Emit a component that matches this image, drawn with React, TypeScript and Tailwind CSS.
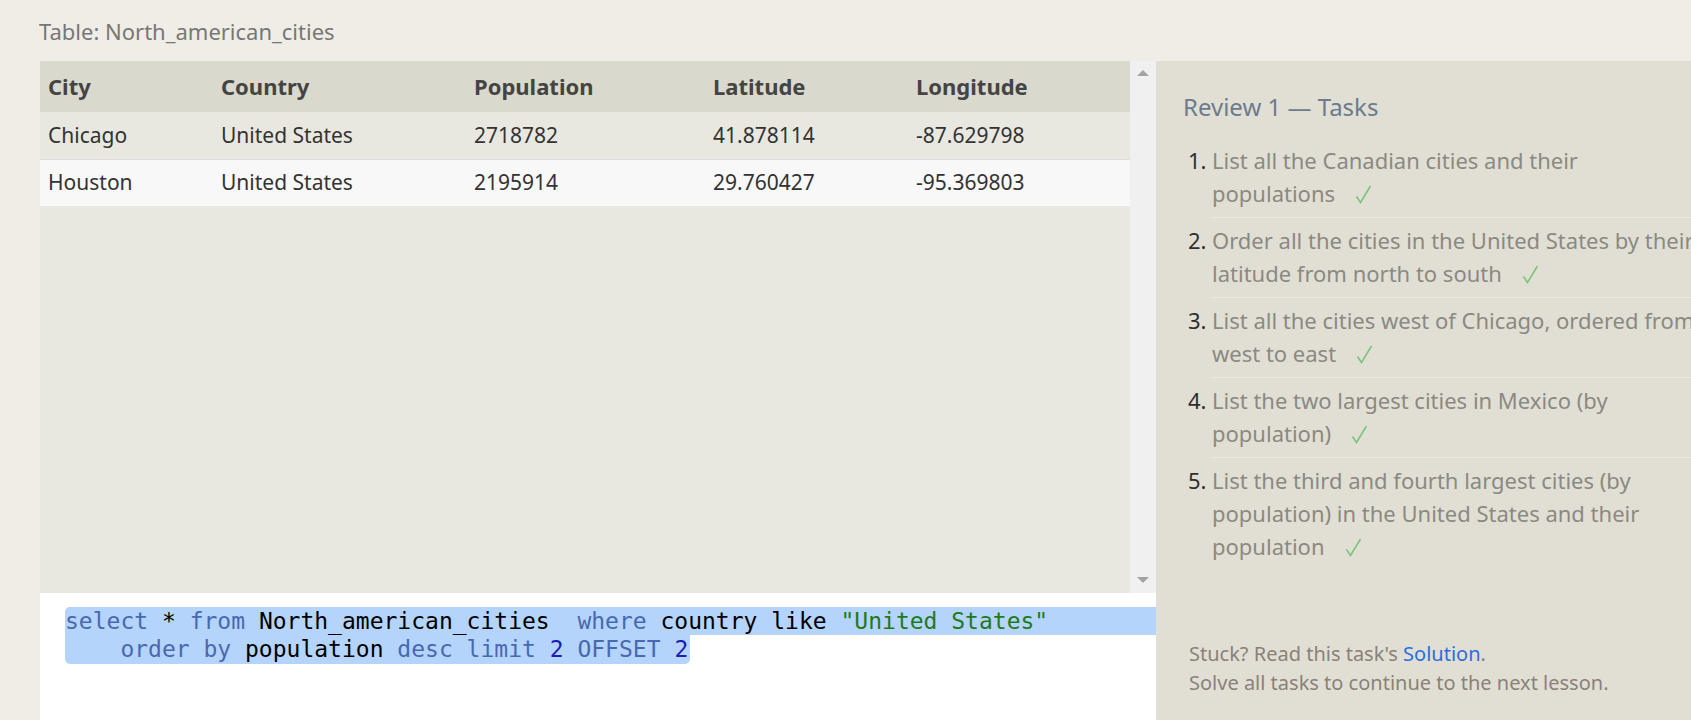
import React from "react";

type Row = { city: string; country: string; population: string; lat: string; lng: string };

const rows: Row[] = [
  { city: "Chicago", country: "United States", population: "2718782", lat: "41.878114", lng: "-87.629798" },
  { city: "Houston", country: "United States", population: "2195914", lat: "29.760427", lng: "-95.369803" },
];

const tasks: string[][] = [
  ["List all the Canadian cities and their", "populations"],
  ["Order all the cities in the United States by their", "latitude from north to south"],
  ["List all the cities west of Chicago, ordered from", "west to east"],
  ["List the two largest cities in Mexico (by", "population)"],
  ["List the third and fourth largest cities (by", "population) in the United States and their", "population"],
];

const sans = "font-['Noto_Sans','Open_Sans',sans-serif]";

const Kw = ({ children }: { children: React.ReactNode }) => <span className="text-[#4869b0]">{children}</span>;
const Num = ({ children }: { children: React.ReactNode }) => <span className="text-[#1c1cb8]">{children}</span>;

const ScrollArrow = ({ up }: { up?: boolean }) => (
  <svg width="14" height="8" viewBox="0 0 14 8" className="block">
    {up ? <polygon points="1,7 13,7 7,1" fill="#a3a3a3" /> : <polygon points="1,1 13,1 7,7" fill="#a3a3a3" />}
  </svg>
);

const Check = () => (
  <svg width="17" height="19" viewBox="0 0 17 19" className="inline-block ml-[20px] align-[-2px]">
    <polyline points="1.5,11.5 5.5,17.5 15.5,1" fill="none" stroke="#7cc47e" strokeWidth="1.6" />
  </svg>
);

export default function App() {
  return (
    <div className={`w-[1691px] h-[720px] overflow-hidden bg-[#efede6] flex flex-col ${sans}`}>
      <div className="h-[61px] shrink-0 pl-[39px] pt-[16px] text-[22px] leading-[30px] text-[#777777]">
        Table: North_american_cities
      </div>

      <div className="flex flex-1 min-h-0">
        {/* left: results + editor */}
        <div className="ml-[40px] w-[1116px] shrink-0 flex flex-col">
          <div className="flex h-[532px] shrink-0">
            <div className="w-[1090px] bg-[#e9e8e0]">
              <table className="w-full table-fixed border-collapse text-[21px] text-[#333333]">
                <colgroup>
                  <col className="w-[174px]" />
                  <col className="w-[253px]" />
                  <col className="w-[239px]" />
                  <col className="w-[203px]" />
                  <col className="w-[221px]" />
                </colgroup>
                <thead>
                  <tr className="h-[51px] bg-[#dad9cd] text-left text-[22px] font-bold text-[#444444]">
                    <th className="pl-[8px]">City</th>
                    <th className="pl-[7px]">Country</th>
                    <th className="pl-[7px]">Population</th>
                    <th className="pl-[7px]">Latitude</th>
                    <th className="pl-[7px]">Longitude</th>
                  </tr>
                </thead>
                <tbody>
                  {rows.map((r, i) => (
                    <tr
                      key={r.city}
                      className={`h-[47px] ${i % 2 === 0 ? "bg-[#e9e8e0]" : "bg-[#f8f8f8] border-t border-[#dedede]"}`}
                    >
                      <td className="pl-[8px]">{r.city}</td>
                      <td className="pl-[7px]">{r.country}</td>
                      <td className="pl-[7px]">{r.population}</td>
                      <td className="pl-[7px]">{r.lat}</td>
                      <td className="pl-[7px]">{r.lng}</td>
                    </tr>
                  ))}
                </tbody>
              </table>
            </div>
            <div className="w-[26px] bg-[#f0f0f0] flex flex-col items-center justify-between pt-[8px] pb-[9px]">
              <ScrollArrow up />
              <ScrollArrow />
            </div>
          </div>

          <div className="flex-1 bg-white pt-[14px] font-['DejaVu_Sans_Mono',monospace] text-[23px] leading-[28px] text-black whitespace-pre">
            <div className="ml-[25px] h-[28px] bg-[#b5d4fc] rounded-tl-[5px]">
              <Kw>select</Kw> * <Kw>from</Kw> North_american_cities  <Kw>where</Kw> country like{" "}
              <span className="text-[#1e7a1e]">"United States"</span>
            </div>
            <div className="ml-[25px] h-[29px] w-fit pr-[2px] bg-[#b5d4fc] rounded-b-[5px]">
              {"    "}
              <Kw>order by</Kw> population <Kw>desc</Kw> <Kw>limit</Kw> <Num>2</Num> <Kw>OFFSET</Kw> <Num>2</Num>
            </div>
          </div>
        </div>

        {/* right: tasks */}
        <div className="w-[600px] shrink-0 bg-[#e1dfd4] pl-[27px] pt-[31px] pb-[23px] flex flex-col">
          <div className="text-[24px] leading-[30px] text-[#6d7b8d]">Review 1 — Tasks</div>
          <ol className="mt-[22px]">
            {tasks.map((lines, i) => (
              <li key={i} className="flex">
                <div className="w-[29px] pl-[5px] shrink-0 text-[22px] leading-[33px] text-[#2f2f2f]">{i + 1}.</div>
                <div
                  className={`flex-1 text-[22px] leading-[33px] text-[#8b8982] whitespace-nowrap ${
                    i < tasks.length - 1 ? "pb-[7px] mb-[6px] border-b border-[#ebe9e1]" : ""
                  }`}
                >
                  {lines.map((l, j) => (
                    <div key={j}>
                      {l}
                      {j === lines.length - 1 && <Check />}
                    </div>
                  ))}
                </div>
              </li>
            ))}
          </ol>
          <div className="mt-auto pl-[6px] text-[20px] leading-[29px] text-[#8a8179]">
            <div>
              Stuck? Read this task's <span className="text-[#2b6de0]">Solution</span>.
            </div>
            <div>Solve all tasks to continue to the next lesson.</div>
          </div>
        </div>
      </div>
    </div>
  );
}
